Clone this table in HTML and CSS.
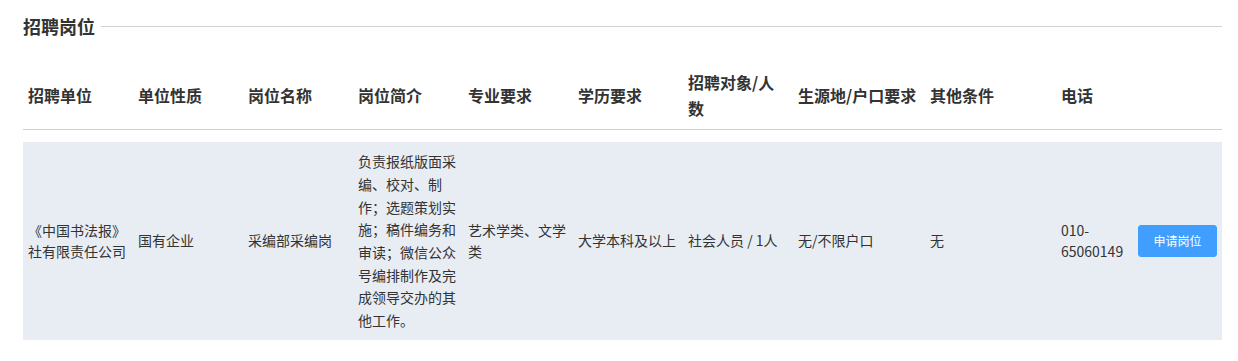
FILE: index.html
```html
<!DOCTYPE html>
<html lang="zh-CN">
<head>
<meta charset="utf-8">
<title>招聘岗位</title>
<link rel="stylesheet" href="styles.css">
</head>
<body>
<div class="section">
  <h2 class="section-title">招聘岗位</h2>
  <div class="table">
    <div class="thead">
      <div class="th">招聘单位</div>
      <div class="th">单位性质</div>
      <div class="th">岗位名称</div>
      <div class="th">岗位简介</div>
      <div class="th">专业要求</div>
      <div class="th">学历要求</div>
      <div class="th">招聘对象/人数</div>
      <div class="th">生源地/户口要求</div>
      <div class="th">其他条件</div>
      <div class="th">电话</div>
      <div class="th"></div>
    </div>
    <div class="row">
      <div class="td">《中国书法报》社有限责任公司</div>
      <div class="td">国有企业</div>
      <div class="td">采编部采编岗</div>
      <div class="td td-desc">负责报纸版面采编、校对、制作；选题策划实施；稿件编务和审读；微信公众号编排制作及完成领导交办的其他工作。</div>
      <div class="td">艺术学类、文学类</div>
      <div class="td">大学本科及以上</div>
      <div class="td">社会人员 / 1人</div>
      <div class="td">无/不限户口</div>
      <div class="td">无</div>
      <div class="td">010-65060149</div>
      <div class="td"><button class="btn-apply" type="button">申请岗位</button></div>
    </div>
  </div>
</div>
</body>
</html>
```

FILE: styles.css
```css
* { box-sizing: border-box; }

body {
  margin: 0;
  background: #fff;
  font-family: "Noto Sans CJK SC", "Noto Sans", sans-serif;
  color: #333;
}

.section {
  width: 1199px;
  margin-left: 23px;
}

.section-title {
  display: flex;
  align-items: center;
  margin: 14px 0 0;
  font-size: 18px;
  line-height: 24px;
  font-weight: bold;
  color: #333;
}

.section-title::after {
  content: "";
  flex: 1;
  height: 1px;
  margin-left: 6px;
  background: #cfd2d6;
}

.thead,
.row {
  display: grid;
  grid-template-columns: 110px 110px 110px 110px 110px 110px 110px 132px 131px 77px 89px;
}

.thead {
  margin-top: 24px;
  border-bottom: 1px solid #cdd1d8;
}

.th {
  display: flex;
  align-items: center;
  padding: 8px 5px;
  font-size: 16px;
  line-height: 25.6px;
  font-weight: bold;
  color: #333;
}

.row {
  margin-top: 12px;
  background: #e8edf4;
}

.td {
  display: flex;
  align-items: center;
  padding: 8px 5px;
  font-size: 14px;
  line-height: 21.5px;
  color: #333;
}

.td-desc {
  line-height: 22.7px;
}

.btn-apply {
  width: 80px;
  height: 32px;
  padding: 0;
  border: 1px solid #409eff;
  border-radius: 3px;
  background: #409eff;
  color: #fff;
  font-family: "Noto Sans CJK SC", "Noto Sans", sans-serif;
  font-size: 12px;
  line-height: 1;
  cursor: pointer;
}
```
